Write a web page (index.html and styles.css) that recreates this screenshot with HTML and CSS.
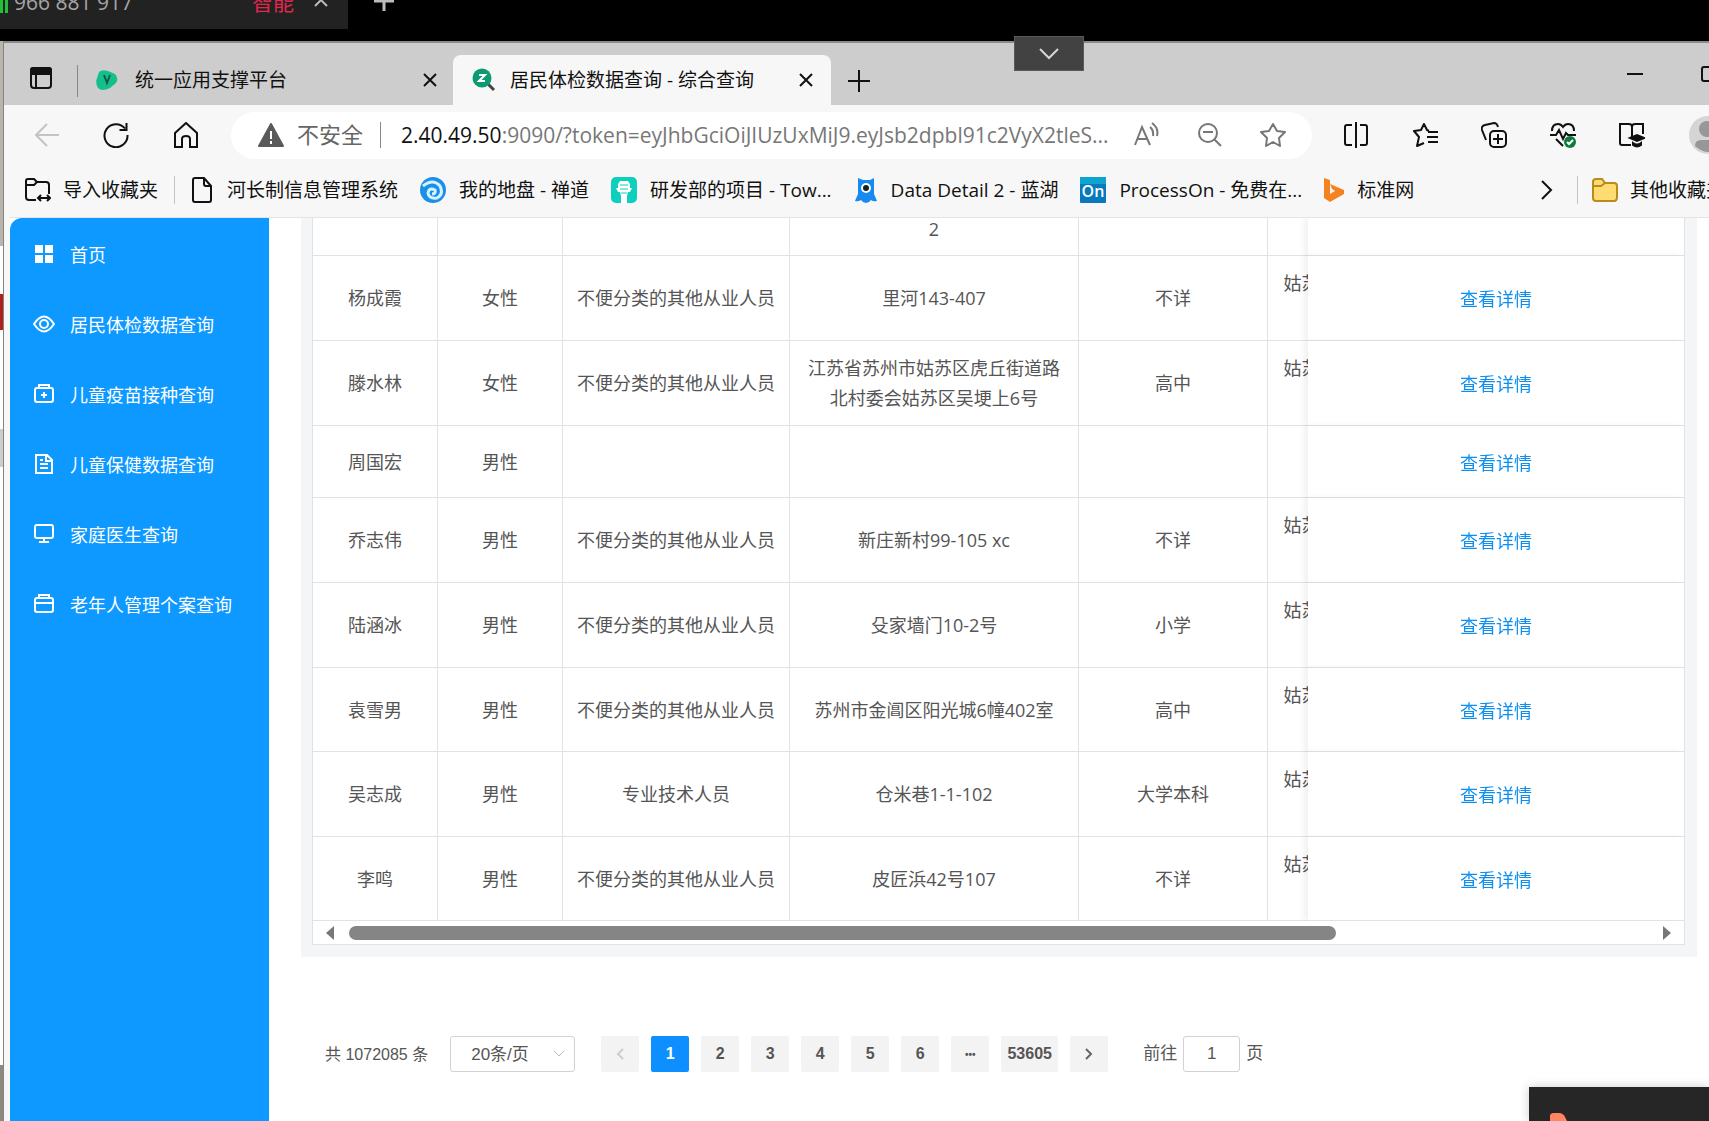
FILE: index.html
```html
<!DOCTYPE html>
<html lang="zh-CN">
<head>
<meta charset="utf-8">
<title>居民体检数据查询 - 综合查询</title>
<link rel="stylesheet" href="styles.css">
</head>
<body>
<header class="meeting">
  <div class="meeting-tab">
    <span class="signal"></span>
    <span class="meeting-id">966 881 917</span>
    <span class="meeting-mode">智能</span>
    <svg class="meeting-caret" width="14" height="9" viewBox="0 0 14 9"><path d="M1 8l6-6 6 6"/></svg>
  </div>
  <button class="meeting-add" aria-label="新建"><svg width="22" height="22" viewBox="0 0 22 22"><path d="M11 1v20M1 11h20"/></svg></button>
</header>
<button class="pull-down" aria-label="展开"><svg width="20" height="12" viewBox="0 0 20 12"><path d="M1 1l9 9 9-9"/></svg></button>

<div class="desktop">
<div class="behind"></div>
<div class="window">
  <div class="tabstrip">
    <button class="plain tab-actions" aria-label="标签页操作"><svg width="22" height="24" viewBox="0 0 22 24"><rect x="1" y="2" width="20" height="20" rx="3"/><path d="M1 8V4q0-2 2-2h16q2 0 2 2v4z" fill="#111"/><path d="M6 8v14"/></svg></button>
    <div class="tab">
      <svg class="fav" width="22" height="22" viewBox="0 0 22 22"><path d="M3 3q3-3 9-1l7 3q4 4 1 9l-6 5q-8 4-12 0-3-5-1-10z" fill="#13c08b" stroke="none"/><path d="M8 6l3 8 3-8" stroke="#14594a" stroke-width="2"/></svg>
      <span class="tab-title">统一应用支撑平台</span>
      <button class="plain" aria-label="关闭"><svg width="14" height="14" viewBox="0 0 14 14"><path d="M1 1l12 12M13 1L1 13"/></svg></button>
    </div>
    <div class="tab active">
      <svg class="fav" width="24" height="24" viewBox="0 0 24 24"><path d="M16 16l6 6" stroke="#444" stroke-width="3"/><circle cx="10" cy="10" r="9.500" fill="#0c9a72" stroke="none"/><path d="M7 7h6l-6 6h6" stroke="#fff" stroke-width="2"/></svg>
      <span class="tab-title">居民体检数据查询 - 综合查询</span>
      <button class="plain" aria-label="关闭"><svg width="14" height="14" viewBox="0 0 14 14"><path d="M1 1l12 12M13 1L1 13"/></svg></button>
    </div>
    <button class="plain new-tab" aria-label="新标签页"><svg width="22" height="22" viewBox="0 0 22 22"><path d="M11 0v22M0 11h22"/></svg></button>
    <div class="win-controls">
      <button class="plain" aria-label="最小化"><svg width="16" height="16" viewBox="0 0 16 16"><path d="M0 8h16"/></svg></button>
      <button class="plain" aria-label="最大化"><svg width="16" height="16" viewBox="0 0 16 16"><rect x="1" y="1" width="14" height="14" rx="2"/></svg></button>
    </div>
  </div>

  <div class="toolbar">
    <button class="plain nav faded" aria-label="后退"><svg width="24" height="24" viewBox="0 0 24 24"><path d="M24 12H1M12 1L1 12l11 11"/></svg></button>
    <button class="plain nav" aria-label="刷新"><svg width="26" height="26" viewBox="0 0 26 26"><path d="M22 6.500A11.500 11.500 0 1 0 24.500 13M23.500 1v7h-7"/></svg></button>
    <button class="plain nav" aria-label="主页"><svg width="26" height="26" viewBox="0 0 26 26"><path d="M2 11L13 1l11 10v14h-7v-8q0-3-4-3t-4 3v8H2z"/></svg></button>
    <div class="address">
      <svg width="26" height="26" viewBox="0 0 26 26"><path d="M13 2L1 24h24z" fill="#5a5a5c" stroke="#5a5a5c" stroke-linejoin="round"/><path d="M13 9v8M13 19v3" stroke="#fff" stroke-width="2"/></svg>
      <span class="insecure">不安全</span>
      <span class="rule"></span>
      <span class="url"><b>2.40.49.50</b>:9090/?token=eyJhbGciOiJIUzUxMiJ9.eyJsb2dpbl91c2VyX2tleS...</span>
      <button class="plain gray" aria-label="朗读"><svg width="26" height="26" viewBox="0 0 26 26"><path d="M1 23L8 5l8 18M4 17h9M16 5q4 3 3 9M18 1q7 5 5 13"/></svg></button>
      <button class="plain gray" aria-label="缩小"><svg width="26" height="26" viewBox="0 0 26 26"><circle cx="11" cy="11" r="9"/><path d="M6 10h10M17 17l7 7"/></svg></button>
      <button class="plain gray" aria-label="收藏"><svg width="26" height="26" viewBox="0 0 26 26"><path d="M13 2l4 7 8 1-6 6 1 8-7-4-7 4 1-8-6-6 8-1z" stroke-linejoin="round"/></svg></button>
    </div>
    <div class="tools">
      <button class="plain" aria-label="分屏"><svg width="26" height="26" viewBox="0 0 26 26"><path d="M9 3H4q-2 0-2 2v16q0 2 2 2h5M17 3h5q2 0 2 2v16q0 2-2 2h-5M13 0v26"/></svg></button>
      <button class="plain" aria-label="收藏夹"><svg width="26" height="26" viewBox="0 0 26 26"><path d="M17 9l-2-1-3-6-3 6-7 1 5 6-2 9 7-3M16 10h10M15 15h11M16 20h10" stroke-linejoin="round"/></svg></button>
      <button class="plain" aria-label="集锦"><svg width="26" height="26" viewBox="0 0 26 26"><rect x="9" y="9" width="16" height="16" rx="4"/><path d="M17 12v10M12 17h10M5 18L1 8q-1-4 3-5l9-2q3 0 4 4"/></svg></button>
      <button class="plain" aria-label="性能"><svg width="26" height="26" viewBox="0 0 26 26"><path d="M2 9q0-7 6-7 3 0 5 3 2-3 5-3 6 0 6 7M0 13h6l3-5 4 9 3-6 2 2h8M6 17l7 7"/><circle cx="20" cy="20" r="6" fill="#0f7b3a" stroke="none"/><path d="M17 20l2 2 4-4" stroke="#fff"/></svg></button>
      <button class="plain" aria-label="阅读"><svg width="26" height="26" viewBox="0 0 26 26"><path d="M12 23H3q-2 0-2-2V2h9q3 0 3 3v12M13 5q0-3 3-3h8v10"/><path d="M11 16l7-3 7 3-7 3zM14 21q4 3 8 0v2q-4 3-8 0z" fill="#111"/></svg></button>
      <button class="plain avatar" aria-label="用户"><svg width="38" height="38" viewBox="0 0 38 38"><circle cx="19" cy="19" r="19" fill="#d5d5d5" stroke="none"/><circle cx="18" cy="13" r="8" fill="#979797" stroke="none"/><path d="M6 30q0-6 6-6h14q6 0 6 6-12 12-26 0z" fill="#979797" stroke="none"/></svg></button>
    </div>
  </div>

  <nav class="bookmarks">
    <a href="#" class="import"><svg width="26" height="26" viewBox="0 0 26 26"><path d="M11 23H4q-3 0-3-3V4q0-2 2-2h6l3 3h9q3 0 3 3v9M1 8h8l3-3M13 21h12M16 18l-3 3 3 3M22 18l3 3-3 3"/></svg>导入收藏夹</a>
    <span class="rule"></span>
    <a href="#" class="river"><svg width="20" height="26" viewBox="0 0 20 26"><path d="M3 1h9l7 8v14q0 2-2 2H3q-2 0-2-2V3q0-2 2-2zM12 1v6q0 2 2 2h5"/></svg>河长制信息管理系统</a>
    <a href="#"><svg width="26" height="26" viewBox="0 0 26 26"><circle cx="13" cy="13" r="13" fill="#1c8fe8" stroke="none"/><path d="M3 9q10-8 17 0 4 8-3 12-8 1-9-5 1-6 7-3 1 4-3 4" stroke="#d3f4ff" stroke-width="3"/></svg>我的地盘 - 禅道</a>
    <a href="#"><svg width="26" height="26" viewBox="0 0 26 26"><rect width="26" height="26" rx="5" fill="#0ccfbd" stroke="none"/><path d="M9 4h8l2 3v4h2l-2 4h-2l-1 4v7h-6v-7l-1-4H7l-2-4h2V7z" fill="#fff" stroke="none"/><path d="M9 8h8M9 12h8M10 16h6" stroke="#0ccfbd" stroke-width="1"/></svg>研发部的项目 - Tow...</a>
    <a href="#"><svg width="24" height="26" viewBox="0 0 24 26"><path d="M4 1l5 2h7l4-2v16l3 7q-4 1-6-1-2 3-5 3t-5-3q-3 2-6 1l3-7z" fill="#1789ef" stroke="none"/><circle cx="12" cy="11" r="5" fill="#fff" stroke="none"/><circle cx="12" cy="11" r="3" fill="#112233" stroke="none"/></svg>Data Detail 2 - 蓝湖</a>
    <a href="#"><svg width="26" height="26" viewBox="0 0 26 26"><rect width="26" height="26" rx="1" fill="#0879bd" stroke="none"/><rect width="26" height="7" fill="#0da4cf" stroke="none"/><text x="13" y="20" text-anchor="middle" class="on">On</text></svg>ProcessOn - 免费在...</a>
    <a href="#"><svg width="20" height="24" viewBox="0 0 20 24"><path d="M0 0l6 2v14l5-3-3-2-2-5 14 6v4L6 24l-6-4z" fill="#f58220" stroke="none"/></svg>标准网</a>
    <button class="plain more" aria-label="更多"><svg width="12" height="20" viewBox="0 0 12 20"><path d="M1 1l9 9-9 9"/></svg></button>
    <span class="rule"></span>
    <a href="#" class="others"><svg width="26" height="26" viewBox="0 0 26 26"><path d="M1 5q0-3 3-3h6l3 4h9q3 0 3 3v11q0 4-3 4H4q-3 0-3-3z" fill="#ffdc72" stroke="#b98a1c"/><path d="M1 9h8l4-3" stroke="#b98a1c"/></svg>其他收藏夹</a>
  </nav>

  <div class="page">
    <aside class="sidebar">
      <a href="#"><svg width="20" height="20" viewBox="0 0 20 20"><path d="M1 1h8v8H1zM11 1h8v8h-8zM1 11h8v8H1zM11 11h8v8h-8z" fill="#fff" stroke="none"/></svg>首页</a>
      <a href="#"><svg width="22" height="20" viewBox="0 0 22 20"><path d="M1 10q10-15 20 0-10 15-20 0z"/><circle cx="11" cy="10" r="4"/></svg>居民体检数据查询</a>
      <a href="#"><svg width="20" height="20" viewBox="0 0 20 20"><rect x="1" y="4" width="18" height="14" rx="2"/><path d="M5 3V1h10v2M10 8v6M7 11h6"/></svg>儿童疫苗接种查询</a>
      <a href="#"><svg width="20" height="20" viewBox="0 0 20 20"><path d="M2 1h11l5 5v13H2zM12 1v6h6M6 6h3M6 10h8M6 14h8"/></svg>儿童保健数据查询</a>
      <a href="#"><svg width="20" height="20" viewBox="0 0 20 20"><rect x="1" y="1" width="18" height="13" rx="2"/><path d="M10 14v4M5 18h10"/></svg>家庭医生查询</a>
      <a href="#"><svg width="20" height="20" viewBox="0 0 20 20"><rect x="1" y="4" width="18" height="14" rx="2"/><path d="M5 3V1h10v2M1 9h18"/></svg>老年人管理个案查询</a>
    </aside>
    <main class="content">
      <section class="card">
        <div class="frame">
        <div class="scroll">
        <table>
          <colgroup><col class="c-name"><col class="c-sex"><col class="c-job"><col class="c-addr"><col class="c-edu"><col class="c-org"><col class="c-act"></colgroup>
          <tbody>
          <tr class="cut"><td></td><td></td><td></td><td>2</td><td></td><td></td><td></td></tr>
          <tr><td>杨成霞</td><td>女性</td><td>不便分类的其他从业人员</td><td>里河143-407</td><td>不详</td><td>姑苏区虎丘街道社区服务中心</td><td><a href="#">查看详情</a></td></tr>
          <tr><td>滕水林</td><td>女性</td><td>不便分类的其他从业人员</td><td>江苏省苏州市姑苏区虎丘街道路北村委会姑苏区吴埂上6号</td><td>高中</td><td>姑苏区虎丘街道社区服务中心</td><td><a href="#">查看详情</a></td></tr>
          <tr class="short"><td>周国宏</td><td>男性</td><td></td><td></td><td></td><td></td><td><a href="#">查看详情</a></td></tr>
          <tr><td>乔志伟</td><td>男性</td><td>不便分类的其他从业人员</td><td>新庄新村99-105 xc</td><td>不详</td><td>姑苏区虎丘街道社区服务中心</td><td><a href="#">查看详情</a></td></tr>
          <tr><td>陆涵冰</td><td>男性</td><td>不便分类的其他从业人员</td><td>殳家墙门10-2号</td><td>小学</td><td>姑苏区虎丘街道社区服务中心</td><td><a href="#">查看详情</a></td></tr>
          <tr class="tight"><td>袁雪男</td><td>男性</td><td>不便分类的其他从业人员</td><td>苏州市金阊区阳光城6幢402室</td><td>高中</td><td>姑苏区虎丘街道社区服务中心</td><td><a href="#">查看详情</a></td></tr>
          <tr><td>吴志成</td><td>男性</td><td>专业技术人员</td><td>仓米巷1-1-102</td><td>大学本科</td><td>姑苏区虎丘街道社区服务中心</td><td><a href="#">查看详情</a></td></tr>
          <tr class="tight"><td>李鸣</td><td>男性</td><td>不便分类的其他从业人员</td><td>皮匠浜42号107</td><td>不详</td><td>姑苏区虎丘街道社区服务中心</td><td><a href="#">查看详情</a></td></tr>
          </tbody>
        </table>
        </div>
        <div class="scrollbar"><span class="arrow left"></span><div class="track"><div class="thumb"></div></div><span class="arrow right"></span></div>
        </div>
      </section>
      <nav class="pager">
        <span class="total">共 1072085 条</span>
        <select aria-label="每页条数"><option>20条/页</option></select>
        <div class="pages">
          <button class="off" aria-label="上一页"><svg width="8" height="12" viewBox="0 0 8 12"><path d="M7 1L2 6l5 5"/></svg></button>
          <button class="current">1</button><button>2</button><button>3</button><button>4</button><button>5</button><button>6</button><button>•••</button><button class="wide">53605</button>
          <button aria-label="下一页"><svg width="8" height="12" viewBox="0 0 8 12"><path d="M1 1l5 5-5 5"/></svg></button>
        </div>
        <label class="jump">前往<input type="text" value="1">页</label>
      </nav>
    </main>
  </div>
</div>
</div>
<div class="toast"><svg width="24" height="12" viewBox="0 0 24 12"><path d="M0 12V3q0-3 4-3h5q4 0 6 4l4 8z" fill="#ff8660" stroke="none"/></svg></div>
</body>
</html>
```
FILE: styles.css
```css
* { box-sizing: border-box; }
body {
  margin: 0;
  height: 100vh;
  overflow: hidden;
  display: flex;
  flex-direction: column;
  background: #000;
  color: #111;
  font-family: "Open Sans", "Noto Sans CJK SC", sans-serif;
  font-size: 18px;
}
a { color: inherit; text-decoration: none; }
svg { display: block; flex: none; fill: none; stroke: #111; stroke-width: 2; }
button { font: inherit; border: 0; padding: 0; }
.plain { background: none; display: flex; flex: none; }
.rule { width: 1px; background: #c4c4c4; flex: none; }

/* meeting bar */
.meeting { height: 41px; display: flex; align-items: flex-start; flex: none; }
.meeting-tab {
  width: 348px;
  height: 29px;
  padding-bottom: 25px;
  overflow: hidden;
  background: #222;
  display: flex;
  align-items: center;
  font-size: 21px;
  line-height: 28px;
  color: #a5a5a5;
}
.signal { width: 8px; height: 22px; border: solid #1fc13c; border-width: 0 3px; margin-right: 6px; }
.meeting-mode { margin-left: auto; color: #e0284f; }
.meeting-caret { margin: 0 20px; stroke: #bbb; }
.meeting-add { background: none; margin: -10px 0 0 25px; }
.meeting-add svg { stroke: #bbb; stroke-width: 3; }
.pull-down {
  position: absolute;
  left: 1014px;
  top: 36px;
  width: 70px;
  height: 35px;
  background: #424242;
  border: 1px solid #5a5a5a;
  display: flex;
  align-items: center;
  justify-content: center;
}
.pull-down svg { stroke: #d6d6d6; }

/* window */
.desktop { flex: 1; min-height: 0; display: flex; }
.behind {
  width: 4px;
  flex: none;
  border-right: 1px solid #85857f;
  background: linear-gradient(#b9b5ad 205px, #fff 205px 253px, #b21f1f 253px 289px, #fff 289px 388px, #ccc 388px 426px, #fff 426px 1024px, #8d8880 1024px);
}
.window { flex: 1; min-width: 0; display: flex; flex-direction: column; background: #f7f7f7; border-top: 2px solid #8a8a8a; }
.tabstrip { height: 62px; flex: none; display: flex; background: #cdcdcd; align-items: center; }
.tab-actions { padding: 14px 25px 6px 26px; }
.tab { height: 50px; align-self: flex-end; display: flex; align-items: center; font-size: 19px; width: 378px; padding: 0 18px 0 19px; }
.tab:not(.active) .tab-title { margin-left: 17px; }
.tab:not(.active) { position: relative; width: 376px; padding-right: 16px; }
.tab:not(.active)::before { content: ""; position: absolute; left: 0; top: 10px; width: 1px; height: 32px; background: #888; }
.tab-title { margin: 0 auto 0 14px; line-height: 26px; white-space: nowrap; }
.tab.active { background: #f7f7f7; border-radius: 8px 8px 0 0; }
.new-tab { margin: 14px 0 0 17px; }
.new-tab svg { stroke-width: 2; }
.win-controls { margin-left: auto; display: flex; gap: 58px; margin-right: -8px; }

.toolbar { height: 61px; padding-bottom: 1px; flex: none; display: flex; align-items: center; padding-left: 31px; overflow: hidden; }
.nav { margin-right: 44px; }
.faded svg { stroke: #c4c4c4; }
.address {
  flex: 1;
  min-width: 0;
  height: 47px;
  margin-left: -12px;
  padding: 0 26px 0 27px;
  border-radius: 24px;
  background: #fff;
  display: flex;
  align-items: center;
}
.insecure { margin: 0 17px 0 13px; font-size: 22px; line-height: 28px; padding-bottom: 3px; color: #666; white-space: nowrap; }
.address .rule { height: 26px; background: #888; }
.url { flex: 1; min-width: 0; margin-left: 20px; font-size: 21px; color: #777; white-space: nowrap; overflow: hidden; }
.url b { color: #111; font-weight: 400; }
.gray { margin-left: 37px; }
.gray:nth-of-type(1) { margin-left: 12px; }
.toolbar .gray svg { stroke: #777; }
.tools { display: flex; align-items: center; gap: 43px; margin: 0 -18px 0 31px; }
.tools .avatar { margin-left: 1px; }

.bookmarks { height: 51px; flex: none; display: flex; align-items: center; padding: 0 0 3px 21px; font-size: 19px; white-space: nowrap; overflow: hidden; }
.bookmarks a { display: flex; align-items: center; gap: 13px; margin-right: 22px; line-height: 28px; flex: none; }
.bookmarks .rule { height: 28px; }
.bookmarks .import { margin-right: 16px; gap: 12px; }
.bookmarks .river { margin-left: 17px; gap: 15px; }
.bookmarks .more { margin: 0 24px 0 auto; }
.bookmarks .others { margin: 0 -16px 0 14px; gap: 12px; }
.on { fill: #fff; stroke: none; font-size: 16px; font-weight: 600; }

/* page */
.page { flex: 1; min-height: 0; display: flex; margin-left: 6px; border-top: 1px solid #e2e4e6; background: #fff; }
.sidebar { width: 259px; flex: none; padding-top: 1px; background: #0d99ff; border-top-left-radius: 12px; color: #fff; }
.sidebar a { height: 70px; display: flex; align-items: center; padding-left: 23px; }
.sidebar svg { width: 22px; stroke: #fff; margin-right: 15px; }
.content { flex: 1; min-width: 0; padding: 0 12px 0 32px; }
.card { background: #f4f5f6; padding: 0 12px 12px 11px; }
.frame { border: 1px solid #dfe2e6; border-top: 0; background: #fff; overflow: hidden; }
.scroll { overflow: hidden; }
table { table-layout: fixed; width: calc(100% + 154px); border-spacing: 0; color: #555; }
.c-name, .c-sex { width: 125px; }
.c-job { width: 227px; }
.c-addr { width: 289px; }
.c-edu { width: 189px; }
.c-act { width: 376px; }
td { height: 85px; padding: 0 16px; border: solid #dfe2e6; border-width: 0 1px 1px 0; text-align: center; line-height: 30px; }
td:nth-child(3) { padding: 0 8px; }
td:nth-child(6) { padding: 0 14px; }
td:last-child { position: sticky; right: 0; padding-top: 2px; background: #fff; box-shadow: -4px 0 6px rgba(0, 0, 0, .06); border-right: 0; color: #0d8ff2; }
.short td { height: 72px; }
.tight td { height: 84px; }
.cut td { height: 38px; padding-bottom: 16px; line-height: 20px; }
.scrollbar { height: 23px; padding: 0 13px; display: flex; align-items: center; gap: 15px; }
.arrow { border: solid transparent; border-width: 7px 0; }
.left { border-right: 8px solid #777; }
.right { border-left: 8px solid #777; }
.track { flex: 1; }
.thumb { width: 76%; height: 14px; border-radius: 7px; background: #858585; }

.pager { display: flex; align-items: center; margin-top: 79px; padding-left: 24px; color: #555; font-family: "Liberation Sans", "Noto Sans CJK SC", sans-serif; font-size: 16px; white-space: nowrap; }
.total { padding-bottom: 3px; }
select, input { height: 36px; border: 1px solid #cfd2d8; border-radius: 3px; background: #fff; color: #555; font: inherit; font-size: 17px; }
select {
  width: 125px;
  margin-left: 22px;
  padding-left: 20px;
  appearance: none;
  background: #fff url("data:image/svg+xml,%3Csvg xmlns='http://www.w3.org/2000/svg' width='10' height='6'%3E%3Cpath d='M0 0l5 5 5-5' fill='none' stroke='%23bbb'/%3E%3C/svg%3E") no-repeat right 10px center;
}
.pages { display: flex; gap: 12px; margin-left: 26px; }
.pages button { width: 38px; height: 36px; display: flex; align-items: center; justify-content: center; border-radius: 2px; background: #f3f3f4; color: #555; font-weight: 700; }
.pages svg { stroke: #666; }
.pages .off svg { stroke: #ccc; }
.pages .current { background: #0d8fff; color: #fff; }
.pages .wide { width: 57px; }
.pages button:nth-child(8) { font-size: 10px; }
.jump { margin-left: 35px; font-size: 17px; }
.jump input { width: 57px; margin: 0 6px; text-align: center; }

.toast { position: absolute; right: 0; bottom: 0; width: 180px; height: 34px; padding: 26px 0 0 21px; background: #262626; overflow: hidden; box-shadow: 0 0 10px rgba(0, 0, 0, .2); }
```
